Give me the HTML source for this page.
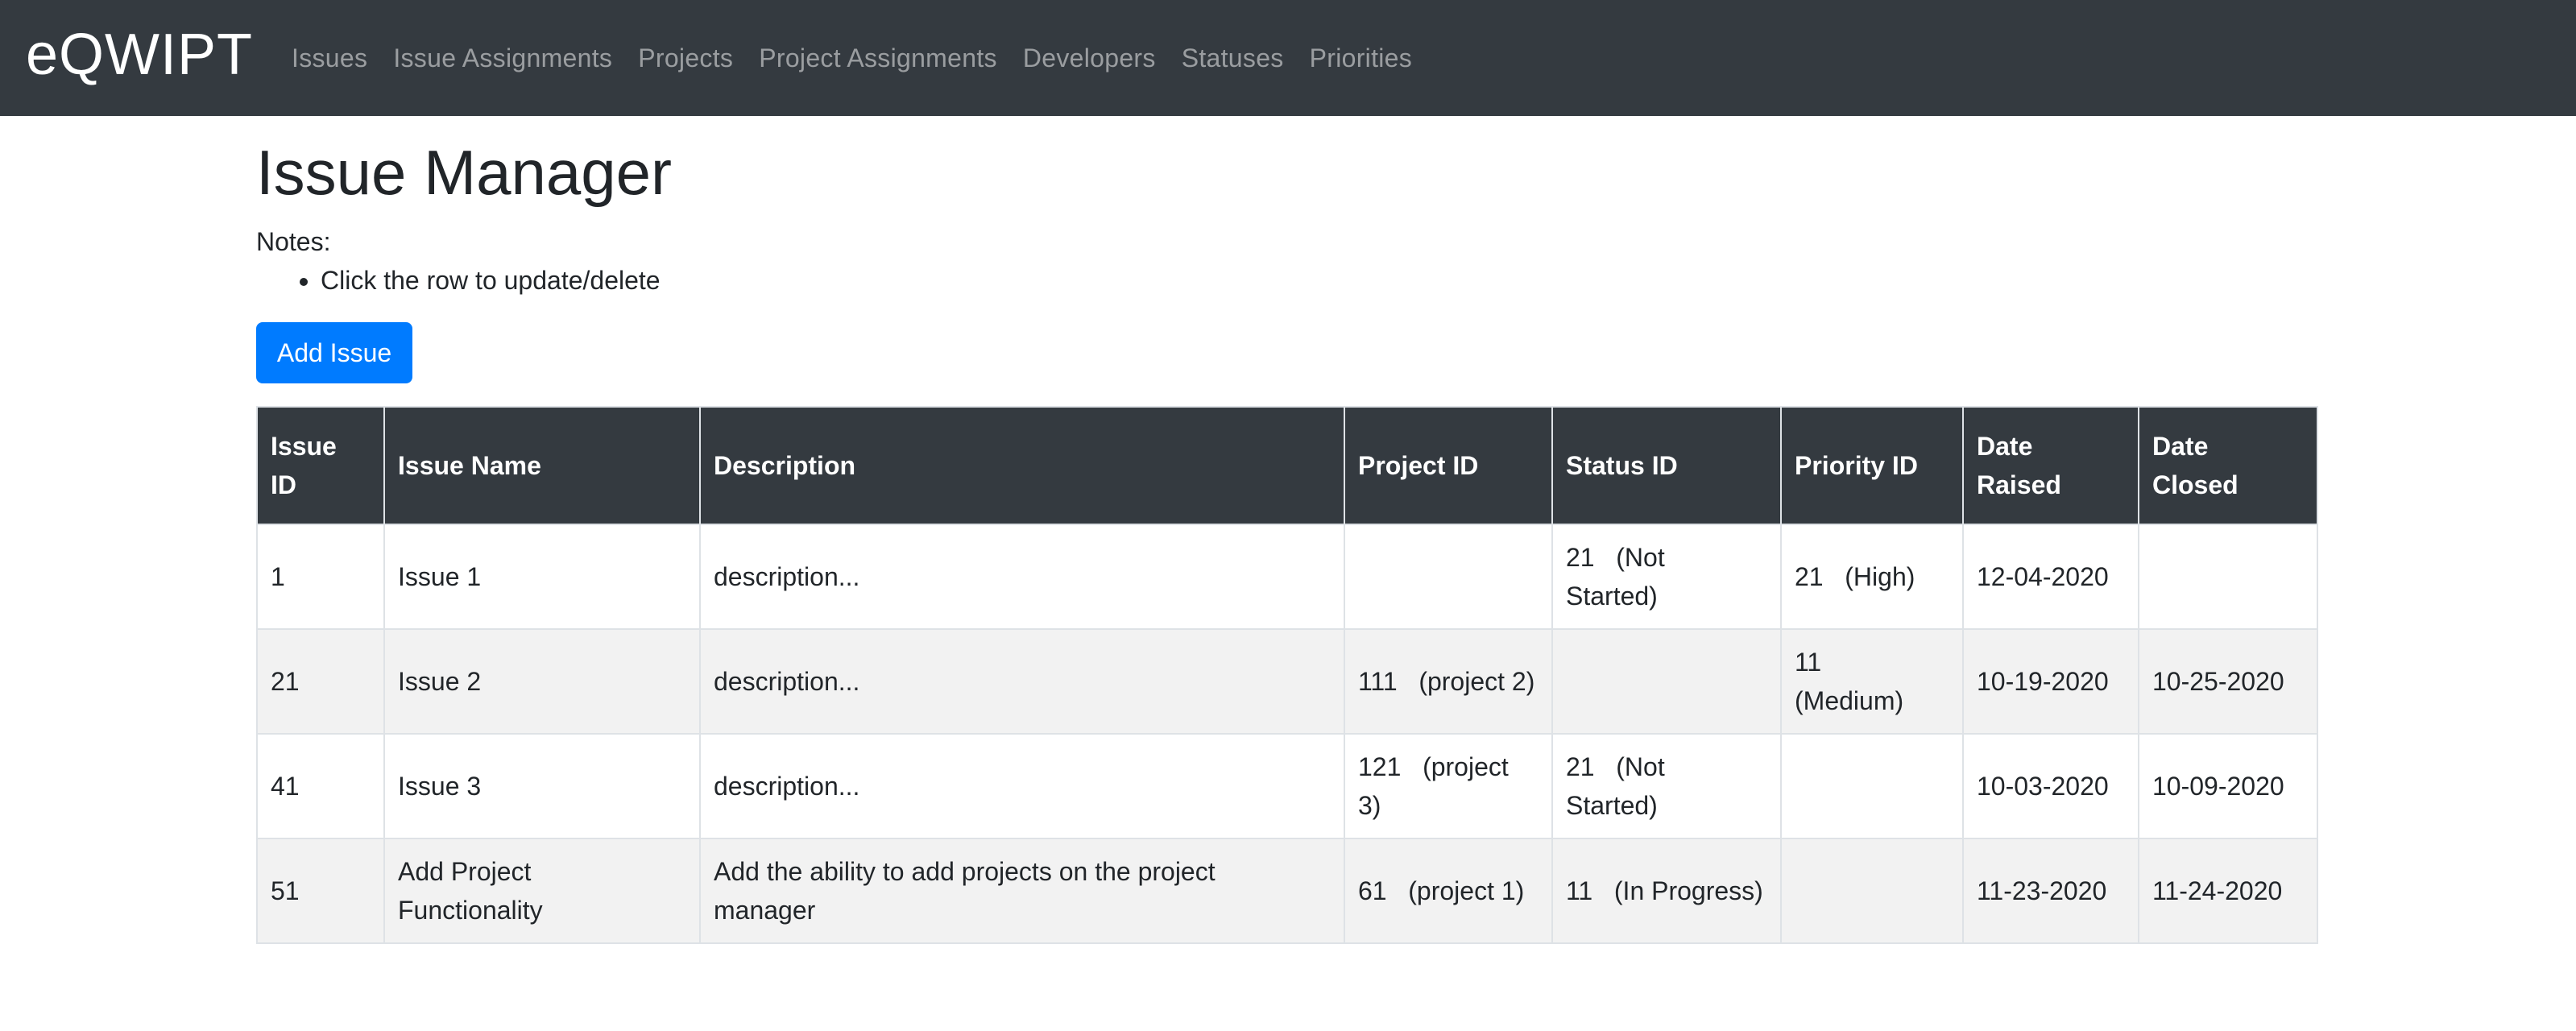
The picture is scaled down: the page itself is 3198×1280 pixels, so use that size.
<!DOCTYPE html>
<html><head><meta charset="utf-8"><style>
html,body{margin:0;padding:0;background:#fff}
body{zoom:2;width:1599px;height:640px;overflow:hidden;font-family:"Liberation Sans",sans-serif;color:#212529;font-size:16px;line-height:24px}
.nav{height:72px;background:#343a40;display:flex;align-items:center;padding-left:16px}
.brand{color:#fff;font-size:36px;margin-right:16px;position:relative;top:-2px;letter-spacing:0.5px}
.nav a{color:rgba(255,255,255,.5);font-size:16px;padding:0 8px;text-decoration:none;letter-spacing:0.15px}
.main{position:absolute;left:159px;top:75px}
h1{font-size:39px;font-weight:500;margin:8px 0 0;line-height:48px}
.notes{margin-top:7px}
ul{margin:0;padding-left:40px}
.btn{display:inline-block;margin-top:14px;background:#007bff;color:#fff;border-radius:4px;width:97px;height:38px;line-height:38px;text-align:center}
table{position:absolute;left:159px;top:252px;border-collapse:collapse;table-layout:fixed;width:1279px}
td,th{border:1px solid #dee2e6;padding:0 8px;text-align:left;vertical-align:middle}
th{background:#343a40;color:#fff;height:72px;font-weight:bold;border-color:#dee2e6}
td{height:64px}
tr.s td{background:#f2f2f2}
</style></head><body>
<div class="nav"><span class="brand">eQWIPT</span><a>Issues</a><a>Issue Assignments</a><a>Projects</a><a>Project Assignments</a><a>Developers</a><a>Statuses</a><a>Priorities</a></div>
<div class="main">
<h1>Issue Manager</h1>
<div class="notes">Notes:</div>
<ul><li>Click the row to update/delete</li></ul>
<div class="btn">Add Issue</div>
</div>
<table>
<colgroup><col style="width:79px"><col style="width:196px"><col style="width:400px"><col style="width:129px"><col style="width:142px"><col style="width:113px"><col style="width:109px"><col style="width:111px"></colgroup>
<tr><th>Issue<br>ID</th><th>Issue Name</th><th>Description</th><th>Project ID</th><th>Status ID</th><th>Priority ID</th><th>Date<br>Raised</th><th>Date<br>Closed</th></tr>
<tr><td>1</td><td>Issue 1</td><td>description...</td><td></td><td>21&nbsp;&nbsp; (Not<br>Started)</td><td>21&nbsp;&nbsp; (High)</td><td>12-04-2020</td><td></td></tr>
<tr class="s"><td>21</td><td>Issue 2</td><td>description...</td><td>111&nbsp;&nbsp; (project 2)</td><td></td><td>11<br>(Medium)</td><td>10-19-2020</td><td>10-25-2020</td></tr>
<tr><td>41</td><td>Issue 3</td><td>description...</td><td>121&nbsp;&nbsp; (project<br>3)</td><td>21&nbsp;&nbsp; (Not<br>Started)</td><td></td><td>10-03-2020</td><td>10-09-2020</td></tr>
<tr class="s"><td>51</td><td>Add Project<br>Functionality</td><td>Add the ability to add projects on the project<br>manager</td><td>61&nbsp;&nbsp; (project 1)</td><td>11&nbsp;&nbsp; (In Progress)</td><td></td><td>11-23-2020</td><td>11-24-2020</td></tr>
</table>
</body></html>
